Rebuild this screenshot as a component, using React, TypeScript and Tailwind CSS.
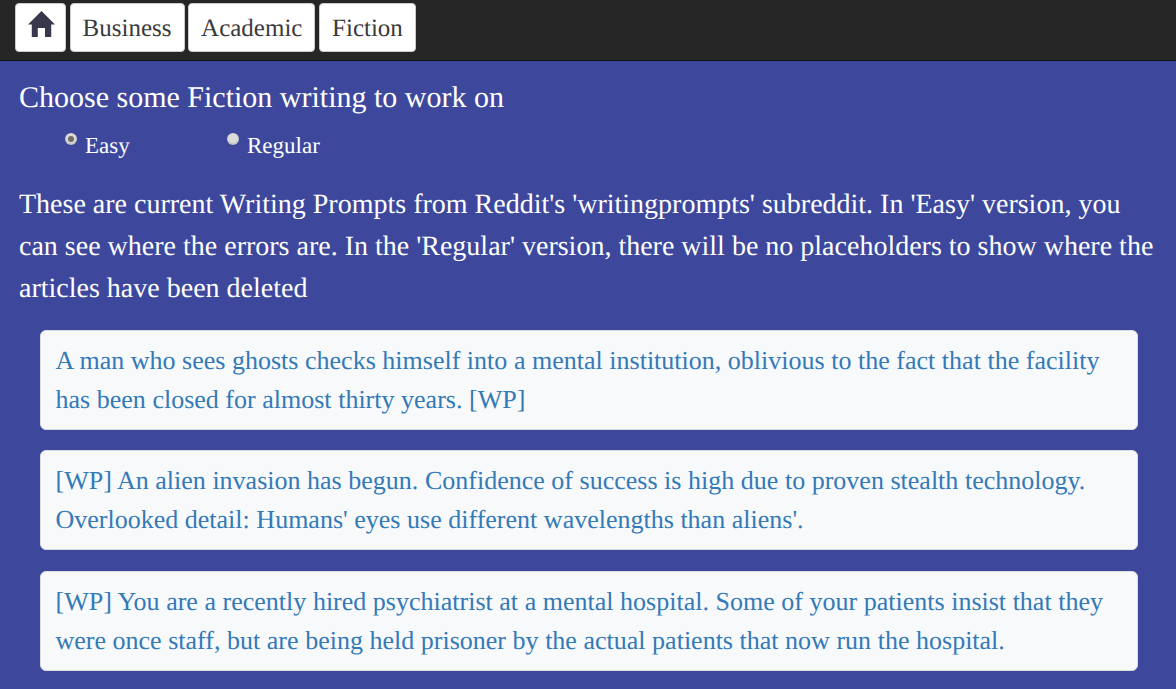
import React from 'react';

const HomeIcon: React.FC = () => (
  <svg viewBox="0 0 27 26" className="h-[26px] w-[27px]" fill="#38384c">
    <path d="M13.5 0 L27 13.5 L23.2 13.5 L23.2 26 L17 26 L17 17 L9.8 17 L9.8 26 L3.8 26 L3.8 13.5 L0 13.5 Z" />
  </svg>
);

const navLinks = ['Business', 'Academic', 'Fiction'];

const prompts = [
  'A man who sees ghosts checks himself into a mental institution, oblivious to the fact that the facility has been closed for almost thirty years. [WP]',
  "[WP] An alien invasion has begun. Confidence of success is high due to proven stealth technology. Overlooked detail: Humans' eyes use different wavelengths than aliens'.",
  '[WP] You are a recently hired psychiatrist at a mental hospital. Some of your patients insist that they were once staff, but are being held prisoner by the actual patients that now run the hospital.',
];

const Radio: React.FC<{ label: string; checked?: boolean; className?: string }> = ({ label, checked, className }) => (
  <div className={`flex items-start ${className ?? ''}`}>
    <span className="mt-[2px] mr-[8px] flex h-[12px] w-[12px] items-center justify-center rounded-full bg-[#dcdcdc] shadow-[inset_0_-1px_2px_rgba(0,0,0,0.2)]">
      {checked && <span className="h-[6px] w-[6px] rounded-full bg-[#6f6f66]" />}
    </span>
    <span className="-mt-[3px] text-[23px] leading-[36px]">{label}</span>
  </div>
);

export default function App() {
  return (
    <div className="h-[689px] overflow-hidden bg-[#3d489d] font-['Liberation_Serif',serif] [text-rendering:geometricPrecision]">
      <nav className="flex h-[61px] gap-[3.6px] border-b border-[#111] bg-[#262626] pt-[3px] pl-[15px]">
        <a className="flex h-[49px] w-[51px] items-start justify-center rounded-[4px] border border-[#ccc] bg-white pt-[7px] pl-[2px]">
          <HomeIcon />
        </a>
        {navLinks.map((link) => (
          <a
            key={link}
            className="flex h-[49px] items-center rounded-[4px] border border-[#ccc] bg-white px-[12px] pt-[2px] text-[25px] text-[#3a3a3a]"
          >
            {link}
          </a>
        ))}
      </nav>
      <main className="px-[19px] text-white">
        <h1 className="mt-[16px] text-[30px] leading-[42px]">Choose some Fiction writing to work on</h1>
        <div className="mt-[12px] flex pl-[46px]">
          <Radio label="Easy" checked className="w-[162px]" />
          <Radio label="Regular" />
        </div>
        <p className="mt-[20px] text-[28px] leading-[42px]">
          These are current Writing Prompts from Reddit's 'writingprompts' subreddit. In 'Easy' version, you can see
          where the errors are. In the 'Regular' version, there will be no placeholders to show where the articles have
          been deleted
        </p>
        <div className="mt-[19.75px] ml-[21px] flex w-[1098px] flex-col gap-[20.5px]">
          {prompts.map((prompt) => (
            <a
              key={prompt}
              className="h-[100px] rounded-[6px] border border-[#ddd] bg-[#f8f9fb] px-[14.5px] py-[10px] text-[26px] leading-[39px] text-[#337ab7] [word-spacing:0.07px]"
            >
              {prompt}
            </a>
          ))}
        </div>
      </main>
    </div>
  );
}
